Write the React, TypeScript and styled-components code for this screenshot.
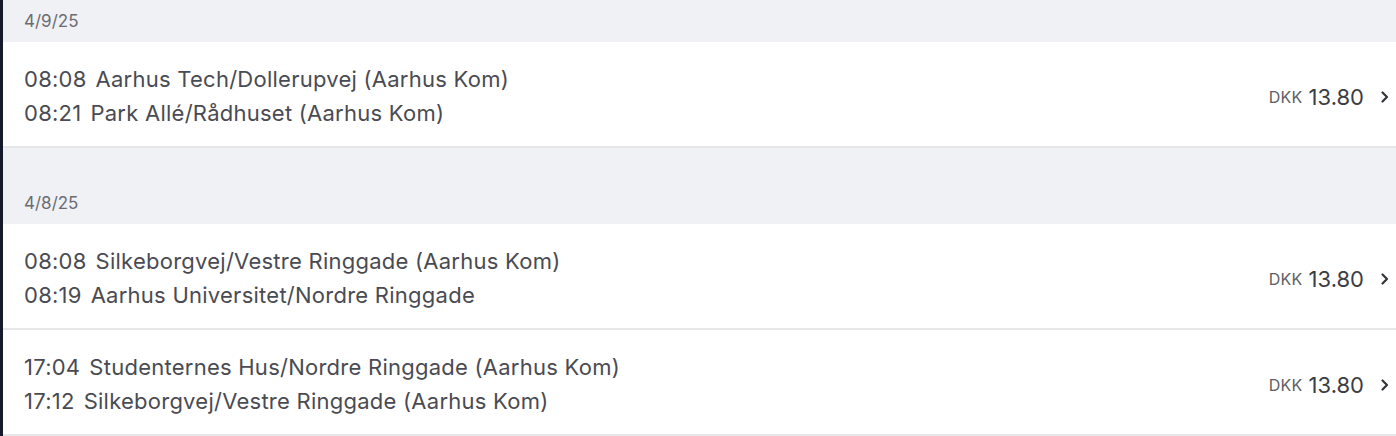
import React from "react";
import styled, { createGlobalStyle } from "styled-components";

const Global = createGlobalStyle`
  html, body { margin: 0; padding: 0; background: #ffffff; }
  body { font-family: Inter, "Noto Sans", sans-serif; }
`;

const Page = styled.div`
  width: 1396px;
  height: 436px;
  overflow: hidden;
  display: flex;
  background: #ffffff;
`;

const Edge = styled.div`
  width: 3px;
  flex: none;
  background: #161a2c;
`;

const List = styled.div`
  flex: 1;
  display: flex;
  flex-direction: column;
  margin-top: -34px;
`;

const DateHeader = styled.div`
  height: 76px;
  box-sizing: border-box;
  background: #f0f1f5;
  display: flex;
  align-items: flex-end;
  padding: 0 0 11px 21px;
  font-size: 17px;
  color: #6b6c72;
`;

const Row = styled.div`
  height: 106px;
  box-sizing: border-box;
  border-bottom: 2px solid #e7e7ea;
  display: flex;
  align-items: center;
  justify-content: space-between;
  padding: 0 6px 0 21px;
`;

const Stops = styled.div`
  display: flex;
  flex-direction: column;
  gap: 11px;
  padding-top: 4px;
`;

const StopLine = styled.div`
  font-size: 22px;
  line-height: 23px;
  color: #4a4b52;
  letter-spacing: 0.25px;
`;

const Time = styled.span`
  margin-right: 9px;
`;

const Price = styled.div`
  display: flex;
  align-items: center;
  gap: 6px;
  padding-top: 5px;
`;

const Currency = styled.span`
  font-size: 16px;
  color: #5d5e64;
  letter-spacing: 0.3px;
`;

const Amount = styled.span`
  font-size: 22px;
  color: #3c3d44;
  margin-right: 10px;
`;

const Chevron = () => (
  <svg width="10" height="14" viewBox="0 0 10 14" fill="none">
    <path d="M2.5 2.5 L7 7 L2.5 11.5" stroke="#33343a" strokeWidth="2.2" strokeLinecap="round" strokeLinejoin="round" />
  </svg>
);

type Trip = { from: [string, string]; to: [string, string] };
type Day = { date: string; trips: Trip[] };

const days: Day[] = [
  {
    date: "4/9/25",
    trips: [
      { from: ["08:08", "Aarhus Tech/Dollerupvej (Aarhus Kom)"], to: ["08:21", "Park Allé/Rådhuset (Aarhus Kom)"] },
    ],
  },
  {
    date: "4/8/25",
    trips: [
      { from: ["08:08", "Silkeborgvej/Vestre Ringgade (Aarhus Kom)"], to: ["08:19", "Aarhus Universitet/Nordre Ringgade"] },
      { from: ["17:04", "Studenternes Hus/Nordre Ringgade (Aarhus Kom)"], to: ["17:12", "Silkeborgvej/Vestre Ringgade (Aarhus Kom)"] },
    ],
  },
];

export default function App() {
  return (
    <Page>
      <Global />
      <Edge />
      <List>
        {days.map((d) => (
          <React.Fragment key={d.date}>
            <DateHeader>{d.date}</DateHeader>
            {d.trips.map((t, i) => (
              <Row key={i}>
                <Stops>
                  <StopLine><Time>{t.from[0]}</Time>{t.from[1]}</StopLine>
                  <StopLine><Time>{t.to[0]}</Time>{t.to[1]}</StopLine>
                </Stops>
                <Price>
                  <Currency>DKK</Currency>
                  <Amount>13.80</Amount>
                  <Chevron />
                </Price>
              </Row>
            ))}
          </React.Fragment>
        ))}
      </List>
    </Page>
  );
}
